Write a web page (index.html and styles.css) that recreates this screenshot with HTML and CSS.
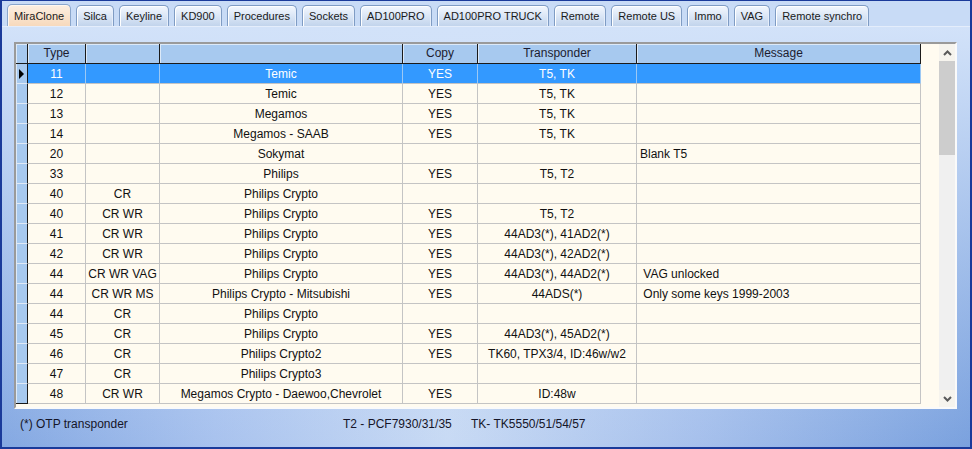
FILE: index.html
```html
<!DOCTYPE html>
<html>
<head>
<meta charset="utf-8">
<link rel="stylesheet" href="styles.css">
</head>
<body>
<div class="window">
  <div class="tabs">
    <div class="tab active">MiraClone</div>
    <div class="tab">Silca</div>
    <div class="tab">Keyline</div>
    <div class="tab">KD900</div>
    <div class="tab">Procedures</div>
    <div class="tab">Sockets</div>
    <div class="tab">AD100PRO</div>
    <div class="tab">AD100PRO TRUCK</div>
    <div class="tab">Remote</div>
    <div class="tab">Remote US</div>
    <div class="tab">Immo</div>
    <div class="tab">VAG</div>
    <div class="tab">Remote synchro</div>
  </div>
  <div class="panel">
    <div class="grid">
      <table class="data">
        <colgroup>
          <col class="c-ind"><col class="c-type"><col class="c-opt"><col class="c-name"><col class="c-copy"><col class="c-tr"><col class="c-msg">
        </colgroup>
        <thead>
          <tr><th class="ind"></th><th>Type</th><th></th><th></th><th>Copy</th><th>Transponder</th><th>Message</th></tr>
        </thead>
        <tbody>
          <tr class="sel"><td class="ind"><span class="arrow"></span></td><td>11</td><td></td><td>Temic</td><td>YES</td><td>T5, TK</td><td class="msg"></td></tr>
          <tr><td class="ind"></td><td>12</td><td></td><td>Temic</td><td>YES</td><td>T5, TK</td><td class="msg"></td></tr>
          <tr><td class="ind"></td><td>13</td><td></td><td>Megamos</td><td>YES</td><td>T5, TK</td><td class="msg"></td></tr>
          <tr><td class="ind"></td><td>14</td><td></td><td>Megamos - SAAB</td><td>YES</td><td>T5, TK</td><td class="msg"></td></tr>
          <tr><td class="ind"></td><td>20</td><td></td><td>Sokymat</td><td></td><td></td><td class="msg">Blank T5</td></tr>
          <tr><td class="ind"></td><td>33</td><td></td><td>Philips</td><td>YES</td><td>T5, T2</td><td class="msg"></td></tr>
          <tr><td class="ind"></td><td>40</td><td>CR</td><td>Philips Crypto</td><td></td><td></td><td class="msg"></td></tr>
          <tr><td class="ind"></td><td>40</td><td>CR WR</td><td>Philips Crypto</td><td>YES</td><td>T5, T2</td><td class="msg"></td></tr>
          <tr><td class="ind"></td><td>41</td><td>CR WR</td><td>Philips Crypto</td><td>YES</td><td>44AD3(*), 41AD2(*)</td><td class="msg"></td></tr>
          <tr><td class="ind"></td><td>42</td><td>CR WR</td><td>Philips Crypto</td><td>YES</td><td>44AD3(*), 42AD2(*)</td><td class="msg"></td></tr>
          <tr><td class="ind"></td><td>44</td><td>CR WR VAG</td><td>Philips Crypto</td><td>YES</td><td>44AD3(*), 44AD2(*)</td><td class="msg"> VAG unlocked</td></tr>
          <tr><td class="ind"></td><td>44</td><td>CR WR MS</td><td>Philips Crypto - Mitsubishi</td><td>YES</td><td>44ADS(*)</td><td class="msg"> Only some keys 1999-2003</td></tr>
          <tr><td class="ind"></td><td>44</td><td>CR</td><td>Philips Crypto</td><td></td><td></td><td class="msg"></td></tr>
          <tr><td class="ind"></td><td>45</td><td>CR</td><td>Philips Crypto</td><td>YES</td><td>44AD3(*), 45AD2(*)</td><td class="msg"></td></tr>
          <tr><td class="ind"></td><td>46</td><td>CR</td><td>Philips Crypto2</td><td>YES</td><td>TK60, TPX3/4, ID:46w/w2</td><td class="msg"></td></tr>
          <tr><td class="ind"></td><td>47</td><td>CR</td><td>Philips Crypto3</td><td></td><td></td><td class="msg"></td></tr>
          <tr class="last"><td class="ind"></td><td>48</td><td>CR WR</td><td>Megamos Crypto - Daewoo,Chevrolet</td><td>YES</td><td>ID:48w</td><td class="msg"></td></tr>
        </tbody>
      </table>
      <div class="spacer"></div>
      <div class="scrollbar">
        <div class="sb-btn">
          <svg width="9" height="6" viewBox="0 0 9 6"><polyline points="1,5 4.5,1.5 8,5" fill="none" stroke="#5a5a5a" stroke-width="2"/></svg>
        </div>
        <div class="sb-thumb"></div>
        <div class="sb-track"></div>
        <div class="sb-btn">
          <svg width="9" height="6" viewBox="0 0 9 6"><polyline points="1,1 4.5,4.5 8,1" fill="none" stroke="#5a5a5a" stroke-width="2"/></svg>
        </div>
      </div>
    </div>
    <div class="status">
      <span class="s1">(*) OTP transponder</span>
      <span class="s2">T2 - PCF7930/31/35</span>
      <span class="s3">TK- TK5550/51/54/57</span>
    </div>
  </div>
</div>
</body>
</html>
```
FILE: styles.css
```css
html, body {
  margin: 0;
  padding: 0;
  background: #1b3d9c;
}
body {
  font-family: "Liberation Sans", Arial, sans-serif;
  font-size: 12px;
  color: #111;
}
.window {
  width: 972px;
  height: 449px;
  box-sizing: border-box;
  border: 2px solid #1a3a9a;
  border-top: 1px solid #1a3a9a;
  background: #c8dbf6;
  display: flex;
  flex-direction: column;
  overflow: hidden;
}
.tabs {
  height: 25px;
  flex: none;
  display: flex;
  align-items: flex-end;
  gap: 5px;
  padding-left: 5px;
  box-sizing: border-box;
}
.tab {
  height: 21px;
  box-sizing: border-box;
  padding: 0 6px;
  border: 1px solid #7f9cc4;
  border-bottom: none;
  border-radius: 5px 5px 0 0;
  background: linear-gradient(to bottom, #f4f8fe 0%, #dde8f7 45%, #c2d4ec 100%);
  box-shadow: inset 1px 1px 0 #ffffff, inset -1px 0 0 #e6eefa;
  font-size: 11px;
  line-height: 21px;
  color: #1a1a1a;
  white-space: nowrap;
}
.tab.active {
  height: 22px;
  border-color: #8aa6cc;
  background: linear-gradient(to bottom, #fcefe2 0%, #f9e2cb 60%, #f7d9bc 100%);
  box-shadow: inset 1px 1px 0 #fff8f0;
  line-height: 23px;
}
.panel {
  flex: 1;
  border-top: 1px solid #e4edfb;
  background:
    linear-gradient(to bottom, rgba(210,226,249,1) 0%, rgba(210,226,249,0.6) 40%, rgba(210,226,249,0) 100%),
    linear-gradient(to right, #84a8e2 0%, #a8c2ee 22%, #c8daf4 46%, #a6c0ec 72%, #7aa1de 100%);
  padding: 15px 0 0 12px;
  display: flex;
  flex-direction: column;
}
.grid {
  width: 943px;
  height: 367px;
  flex: none;
  box-sizing: border-box;
  border-top: 2px solid #9a9a9a;
  border-left: 2px solid #9a9a9a;
  border-right: 2px solid #fafafa;
  border-bottom: 2px solid #fafafa;
  background: #fffbf0;
  display: flex;
  overflow: hidden;
}
table.data {
  border-collapse: separate;
  border-spacing: 0;
  table-layout: fixed;
  width: 905px;
  align-self: flex-start;
  font-size: 12px;
}
col.c-ind { width: 12px; }
col.c-type { width: 58px; }
col.c-opt { width: 74px; }
col.c-name { width: 243px; }
col.c-copy { width: 75px; }
col.c-tr { width: 159px; }
col.c-msg { width: 284px; }
th {
  height: 18px;
  padding: 0;
  background: #a7c9ef;
  border-right: 1px solid #1a1a1a;
  border-bottom: 1px solid #1a1a1a;
  box-shadow: inset 1px 1px 0 #dce9f8;
  font-weight: normal;
  color: #1c1c30;
  text-align: center;
  line-height: 19px;
  white-space: nowrap;
}
td {
  height: 18px;
  padding: 1px 0 0 0;
  border-right: 1px solid #c4c4c4;
  border-bottom: 1px solid #c4c4c4;
  text-align: center;
  line-height: 18px;
  white-space: pre;
  overflow: hidden;
  color: #111;
}
td.msg {
  text-align: left;
  padding-left: 3px;
}
td.ind {
  background: #a7c9ef;
  border-right: 1px solid #1a1a1a;
  border-bottom: 1px solid #dfe9f6;
  box-shadow: inset 1px 0 0 #dce9f8;
  position: relative;
}
tr.last td.ind {
  border-bottom: 1px solid #1a1a1a;
}
tr.sel td {
  background: #3399ff;
  color: #ffffff;
  border-right-color: #9cc8f4;
}
tr.sel td.ind {
  background: #a7c9ef;
  border-right-color: #1a1a1a;
}
.arrow {
  position: absolute;
  left: 3px;
  top: 5px;
  width: 0;
  height: 0;
  border-top: 5px solid transparent;
  border-bottom: 5px solid transparent;
  border-left: 5px solid #000;
}
.spacer {
  width: 18px;
  flex: none;
}
.scrollbar {
  width: 16px;
  flex: none;
  display: flex;
  flex-direction: column;
  background: #f0f0f0;
}
.sb-btn {
  height: 17px;
  flex: none;
  display: flex;
  align-items: center;
  justify-content: center;
  background: #f6f4ee;
}
.sb-thumb {
  height: 94px;
  flex: none;
  background: #cdcdcd;
}
.sb-track {
  flex: 1;
  background: #f0f0f0;
}
.status {
  display: flex;
  padding: 8px 0 0 6px;
  font-size: 12px;
  color: #151528;
  line-height: 14px;
}
.s1 { width: 323px; }
.s2 { width: 128px; }
```
